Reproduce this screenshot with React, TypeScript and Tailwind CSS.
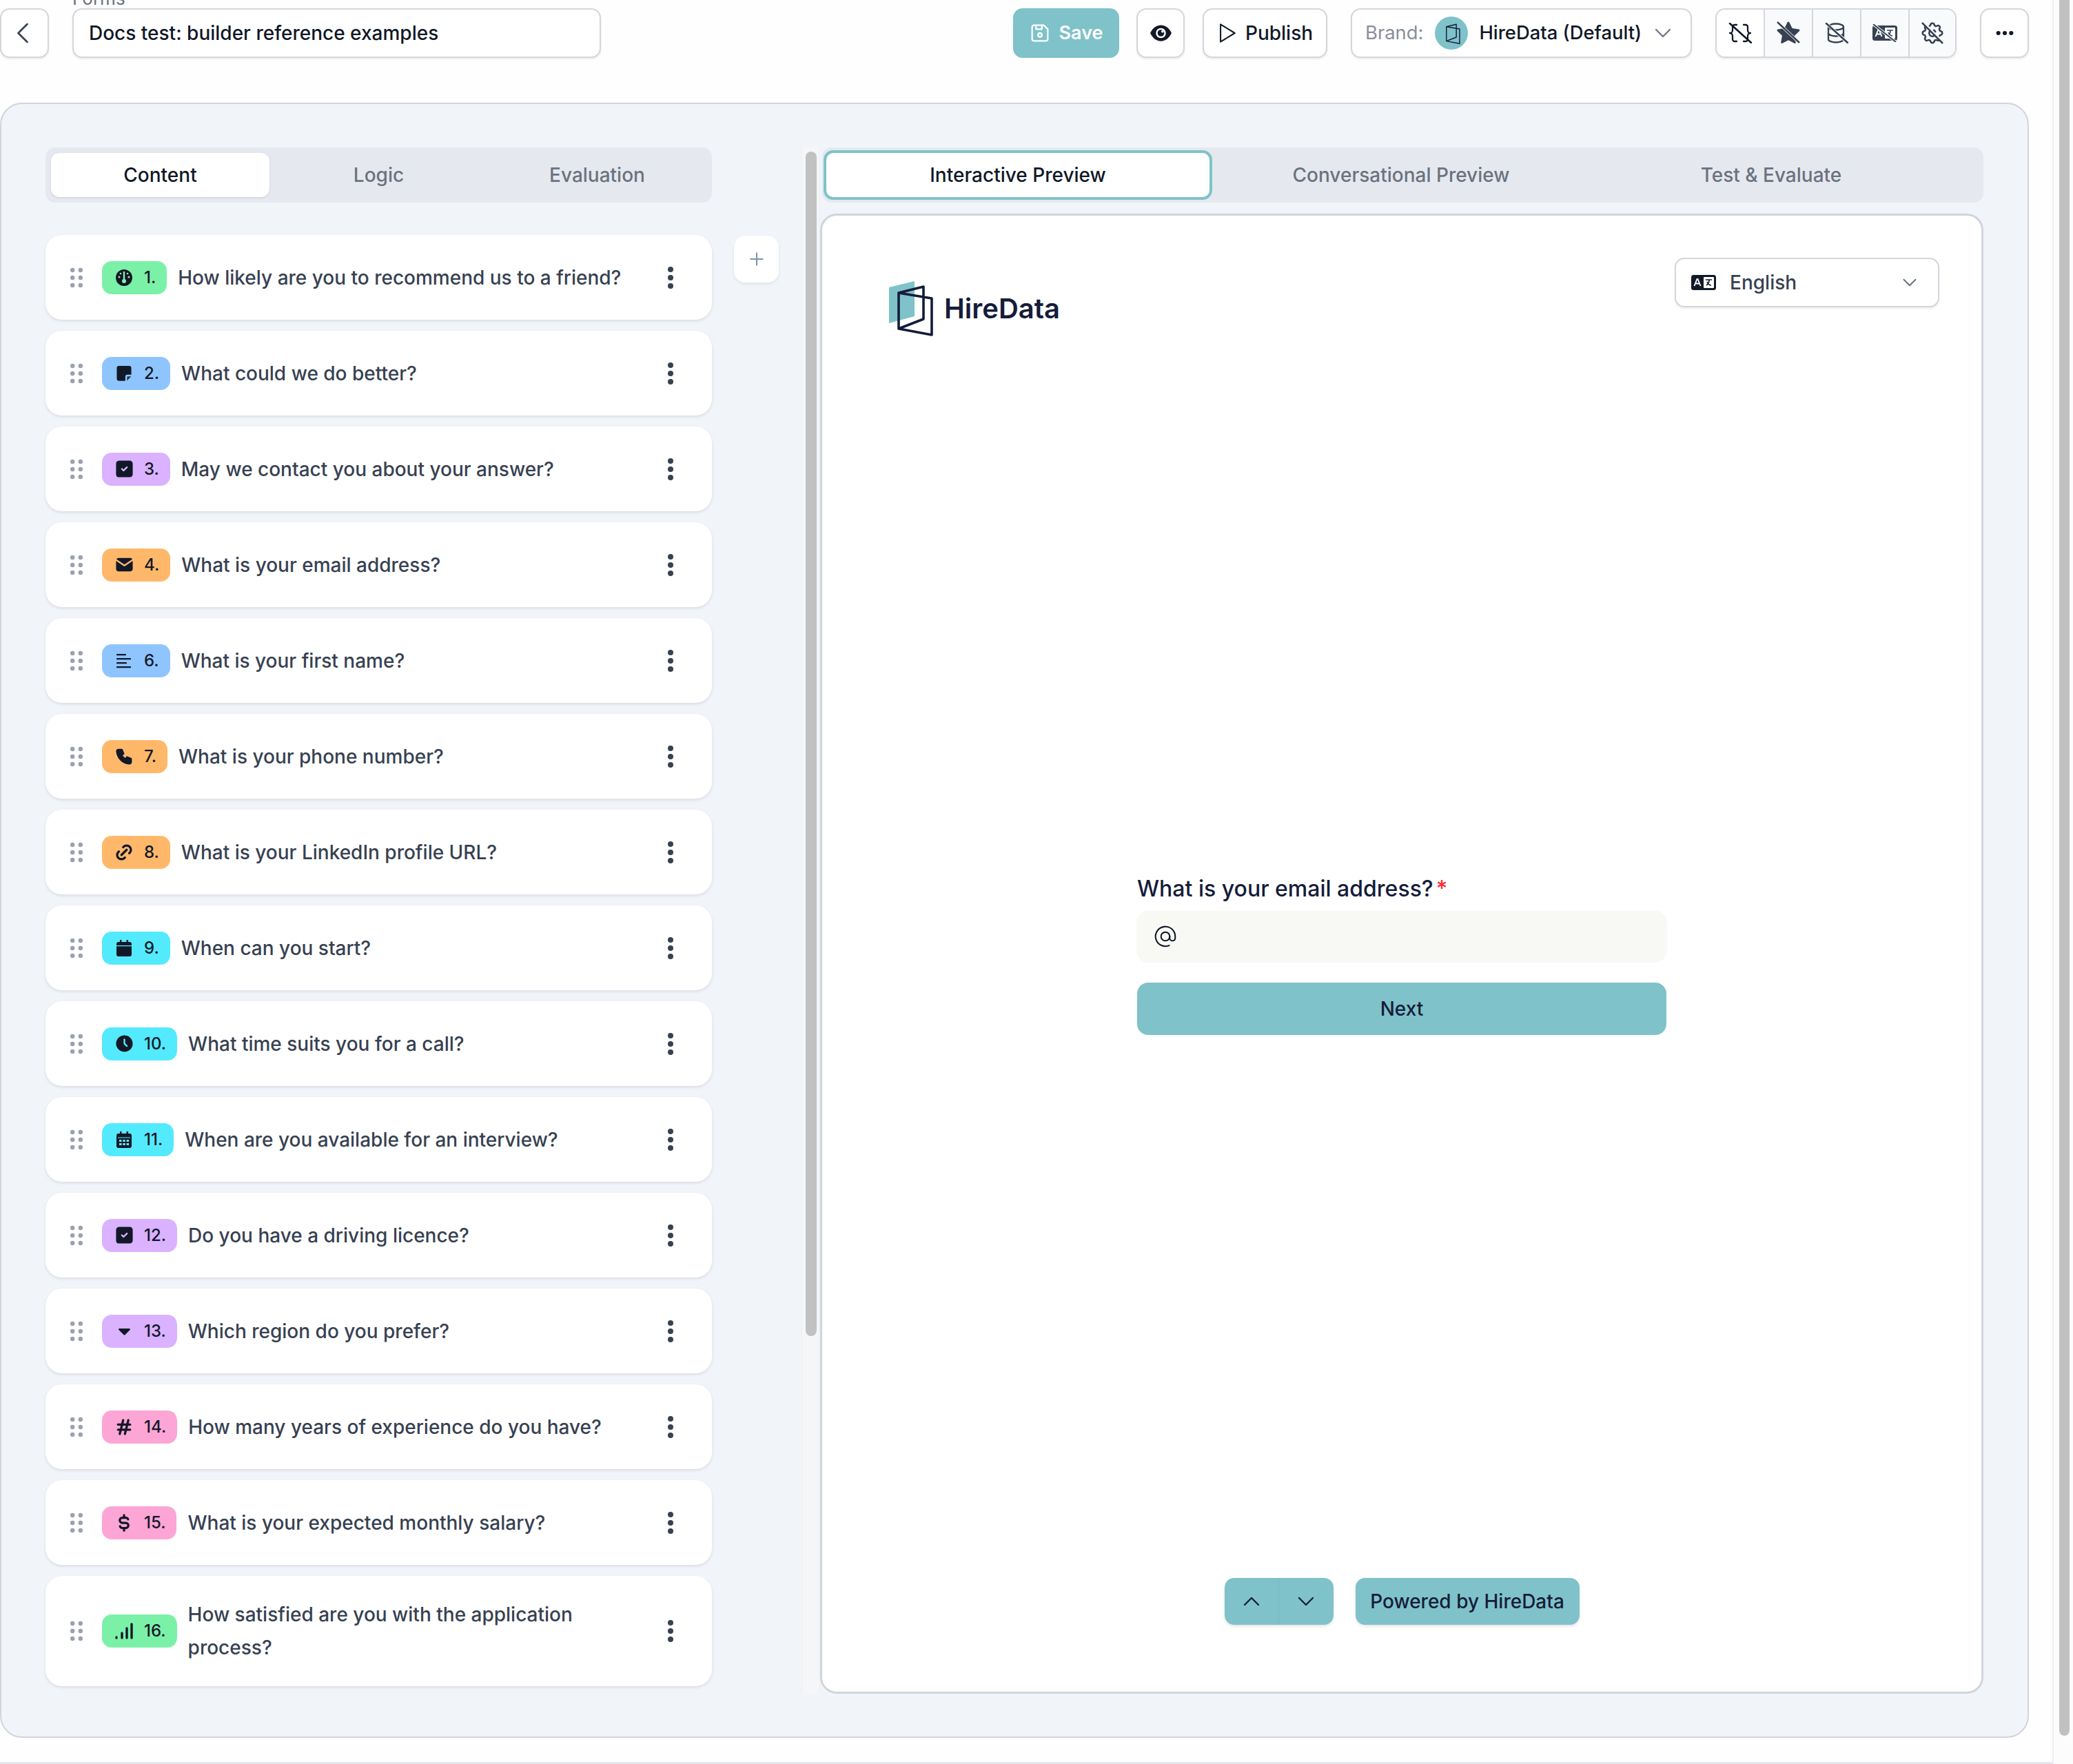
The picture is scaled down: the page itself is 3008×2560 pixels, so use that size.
import type { ReactNode } from "react";
import {
  TbAt,
  TbCaretDownFilled,
  TbChevronDown,
  TbChevronLeft,
  TbChevronUp,
  TbClockFilled,
  TbCurrencyDollar,
  TbDeviceFloppy,
  TbDots,
  TbHash,
  TbLink,
  TbMailFilled,
  TbPhoneFilled,
  TbPlayerPlay,
  TbPlus,
  TbSettingsOff,
  TbSquareCheckFilled,
  TbStarFilled,
} from "react-icons/tb";

function Logo({ className }: { className: string }) {
  return (
    <svg viewBox="0 0 64 80" fill="none" className={className}>
      <path d="M0 9 37 0v51L0 61z" fill="#7fc2c9" />
      <path
        d="M14 17 50 8v47L14 69zM14 17l48 8v53L14 69"
        stroke="#151c3a"
        strokeWidth="3.6"
        strokeLinejoin="round"
      />
    </svg>
  );
}

function GaugeIcon() {
  return (
    <svg viewBox="0 0 24 24" className="w-[24px] h-[24px]">
      <circle cx="12" cy="12" r="12" fill="#111827" />
      <path d="M12 3v13" stroke="#86efac" strokeWidth="2.400" />
      <circle cx="12" cy="17" r="3" fill="#86efac" />
      <circle cx="5" cy="11" r="1.500" fill="#86efac" />
      <circle cx="19" cy="11" r="1.500" fill="#86efac" />
      <circle cx="7" cy="6" r="1.300" fill="#86efac" />
      <circle cx="17" cy="6" r="1.300" fill="#86efac" />
    </svg>
  );
}

function NoteIcon() {
  return (
    <svg viewBox="0 0 24 24" className="w-[22px] h-[22px]">
      <path
        d="M4 0h16a3.5 3.5 0 0 1 3.5 3.5V14h-6.500a3 3 0 0 0-3 3v6.800H4A3.500 3.500 0 0 1 .5 20.500v-17A3.500 3.500 0 0 1 4 0z"
        fill="#111827"
      />
      <path d="M17 16.500h6.300l-6.800 7z" fill="#111827" opacity="0.85" />
    </svg>
  );
}

function LinesIcon() {
  return (
    <svg viewBox="0 0 22 22" className="w-[22px] h-[22px]" fill="#111827">
      <rect x="0" y="1" width="14" height="2.200" rx="0.600" />
      <rect x="0" y="7" width="21" height="2.200" rx="0.600" />
      <rect x="0" y="13" width="15" height="2.200" rx="0.600" />
      <rect x="0" y="19" width="21" height="2.200" rx="0.600" />
    </svg>
  );
}

function CalendarIcon() {
  return (
    <svg viewBox="0 0 22 24" className="w-[22px] h-[24px]" fill="#111827">
      <path d="M5 0h2.400v3h7.200V0H17v3h2a3 3 0 0 1 3 3v2H0V6a3 3 0 0 1 3-3h2z" />
      <path d="M0 9.200h22V21a3 3 0 0 1-3 3H3a3 3 0 0 1-3-3z" />
    </svg>
  );
}

function CalendarGridIcon() {
  return (
    <svg viewBox="0 0 22 24" className="w-[22px] h-[24px]">
      <path
        d="M5 0h2.400v3h7.200V0H17v3h2a3 3 0 0 1 3 3v15a3 3 0 0 1-3 3H3a3 3 0 0 1-3-3V6a3 3 0 0 1 3-3h2z"
        fill="#111827"
      />
      <path
        d="M2 8.500h18v1H2zM4 12h3.500v3H4zM9.300 12h3.500v3H9.300zM14.600 12h3.500v3h-3.500zM4 17h3.500v3H4zM9.300 17h3.500v3H9.300zM14.600 17h3.500v3h-3.500z"
        fill="#67e8f9"
      />
    </svg>
  );
}

function BarsIcon() {
  return (
    <svg viewBox="0 0 26 24" className="w-[26px] h-[24px]" stroke="#111827" strokeWidth="3.400" strokeLinecap="round">
      <path d="M2 22v-1M10 22v-7M17 22V8M24 22V2" />
    </svg>
  );
}

function BracesOff() {
  return (
    <svg viewBox="0 0 34 30" className="w-[34px] h-[30px]" fill="none" stroke="#111827" strokeWidth="2.300" strokeLinecap="round" strokeLinejoin="round">
      <path d="M12 3H9a3 3 0 0 0-3 3v5a4 4 0 0 1-4 4 4 4 0 0 1 4 4v5a3 3 0 0 0 3 3h3" />
      <path d="M22 3h3a3 3 0 0 1 3 3v5a4 4 0 0 0 4 4 4 4 0 0 0-4 4v5a3 3 0 0 1-3 3h-3" />
      <path d="M2 1 33 29" strokeWidth="2.600" />
    </svg>
  );
}

function DatabaseOff() {
  return (
    <svg viewBox="0 0 34 30" className="w-[34px] h-[30px]" fill="none" stroke="#374151" strokeWidth="2.300" strokeLinecap="round">
      <ellipse cx="16" cy="6" rx="11" ry="4.500" />
      <path d="M5 6v18c0 2.500 5 4.500 11 4.500S27 26.500 27 24V6M5 15c0 2.500 5 4.500 11 4.500S27 17.500 27 15" />
      <path d="M2 1 33 29" stroke="#f8fafc" strokeWidth="4.500" />
      <path d="M2 1 33 29" strokeWidth="2.600" />
    </svg>
  );
}

function LanguageBox({ slash }: { slash?: boolean }) {
  return (
    <svg viewBox="0 0 36 26" className="w-[36px] h-[26px]">
      <rect x="0" y="2" width="36" height="22" rx="3.500" fill={slash ? "#374151" : "#111827"} />
      <rect x="18" y="5" width="15" height="16" rx="1" fill="#ffffff" />
      <path d="M4.500 18 8.500 8h1l4 10M6.200 14.500h5.600" stroke="#ffffff" strokeWidth="1.900" fill="none" />
      <path d="M21 9h9M26 9c0 4-2 7-4 8M23 12c1 3 4 5 6 5" stroke={slash ? "#374151" : "#111827"} strokeWidth="1.700" fill="none" />
      {slash && <path d="M1 0 34 26" stroke="#f8fafc" strokeWidth="4" />}
      {slash && <path d="M1 0 34 26" stroke="#374151" strokeWidth="2" />}
    </svg>
  );
}

function StarOff() {
  return (
    <span className="relative flex w-[36px] h-[36px] items-center justify-center">
      <TbStarFilled className="w-[36px] h-[36px] text-[#374151]" />
      <svg viewBox="0 0 36 36" className="absolute inset-0 w-[36px] h-[36px]">
        <path d="M2 2 34 32" stroke="#f8fafc" strokeWidth="4" />
        <path d="M2 2 34 32" stroke="#374151" strokeWidth="2.400" />
      </svg>
    </span>
  );
}

function EyeIcon() {
  return (
    <svg viewBox="0 0 32 26" className="w-[31px] h-[26px]">
      <path d="M0 13C4 4.500 10 1 16 1s12 3.500 16 12c-4 8.500-10 12-16 12S4 21.500 0 13z" fill="#111827" />
      <circle cx="16" cy="13" r="7.500" fill="#ffffff" />
      <circle cx="16" cy="13" r="5" fill="#111827" />
      <circle cx="18.500" cy="10.500" r="2" fill="#ffffff" />
    </svg>
  );
}

function Grip() {
  return (
    <svg viewBox="0 0 18 30" className="w-[18px] h-[30px] text-gray-400 shrink-0" fill="currentColor">
      <circle cx="3.200" cy="4" r="3.200" />
      <circle cx="14.800" cy="4" r="3.200" />
      <circle cx="3.200" cy="15" r="3.200" />
      <circle cx="14.800" cy="15" r="3.200" />
      <circle cx="3.200" cy="26" r="3.200" />
      <circle cx="14.800" cy="26" r="3.200" />
    </svg>
  );
}

function Kebab() {
  return (
    <svg viewBox="0 0 10 32" className="w-[10px] h-[32px] text-[#374151] shrink-0" fill="currentColor">
      <circle cx="5" cy="4" r="4" />
      <circle cx="5" cy="16" r="4" />
      <circle cx="5" cy="28" r="4" />
    </svg>
  );
}

const iconClass = "w-[29px] h-[29px] text-[#111827] shrink-0";
const strokeIcon = "w-[30px] h-[30px] text-[#111827] shrink-0";

const questions: { n: string; text: string; color: string; icon: ReactNode; tall?: boolean }[] = [
  { n: "1.", text: "How likely are you to recommend us to a friend?", color: "bg-green-300", icon: <GaugeIcon /> },
  { n: "2.", text: "What could we do better?", color: "bg-blue-300", icon: <NoteIcon /> },
  { n: "3.", text: "May we contact you about your answer?", color: "bg-purple-300", icon: <TbSquareCheckFilled className={iconClass} /> },
  { n: "4.", text: "What is your email address?", color: "bg-orange-300", icon: <TbMailFilled className={iconClass} /> },
  { n: "6.", text: "What is your first name?", color: "bg-blue-300", icon: <LinesIcon /> },
  { n: "7.", text: "What is your phone number?", color: "bg-orange-300", icon: <TbPhoneFilled className={iconClass} /> },
  { n: "8.", text: "What is your LinkedIn profile URL?", color: "bg-orange-300", icon: <TbLink className={strokeIcon} strokeWidth={2.6} /> },
  { n: "9.", text: "When can you start?", color: "bg-cyan-300", icon: <CalendarIcon /> },
  { n: "10.", text: "What time suits you for a call?", color: "bg-cyan-300", icon: <TbClockFilled className={iconClass} /> },
  { n: "11.", text: "When are you available for an interview?", color: "bg-cyan-300", icon: <CalendarGridIcon /> },
  { n: "12.", text: "Do you have a driving licence?", color: "bg-purple-300", icon: <TbSquareCheckFilled className={iconClass} /> },
  { n: "13.", text: "Which region do you prefer?", color: "bg-purple-300", icon: <TbCaretDownFilled className={iconClass} /> },
  { n: "14.", text: "How many years of experience do you have?", color: "bg-pink-300", icon: <TbHash className={strokeIcon} strokeWidth={2.6} /> },
  { n: "15.", text: "What is your expected monthly salary?", color: "bg-pink-300", icon: <TbCurrencyDollar className={strokeIcon} strokeWidth={2.6} /> },
  { n: "16.", text: "How satisfied are you with the application process?", color: "bg-green-300", icon: <BarsIcon />, tall: true },
];

function QuestionCard({ n, text, color, icon, tall }: (typeof questions)[number]) {
  return (
    <div
      className={`flex items-center bg-white rounded-[24px] pl-[36px] pr-[55px] shadow-[0_2px_4px_rgba(15,23,42,0.1)] shrink-0 ${
        tall ? "h-[160px]" : "h-[123px]"
      }`}
    >
      <Grip />
      <div className={`ml-[28px] flex items-center h-[48px] rounded-[14px] pl-[18px] pr-[16px] shrink-0 ${color}`}>
        <span className="w-[28px] flex justify-center">{icon}</span>
        <span className="ml-[15px] text-[24px] font-medium text-[#111827]">{n}</span>
      </div>
      <p className="ml-[16px] max-w-[680px] text-[28px] leading-[48px] font-medium text-[#374151]">{text}</p>
      <div className="ml-auto">
        <Kebab />
      </div>
    </div>
  );
}

const headerBtn = "h-[72px] mt-[12px] flex items-center justify-center rounded-[14px] border-2 border-[#d4d6dc] bg-white shadow-[0_2px_3px_rgba(15,23,42,0.08)]";

export default function App() {
  return (
    <div className="w-[3008px] h-[2560px] flex overflow-hidden bg-[#fefefe] [font-family:Inter,sans-serif] text-[#111827]">
      <div className="w-[2978px] shrink-0 flex flex-col border-b-[3px] border-[#e5e7eb]">
        <header className="h-[149px] shrink-0 flex items-start pr-[34px]">
          <button className={`${headerBtn} w-[71px] bg-[#f8fafc]`}>
            <TbChevronLeft className="w-[52px] h-[52px] text-[#374151] -ml-[6px]" strokeWidth={1.2} />
          </button>
          <div className="ml-[34px] flex flex-col">
            <p className="-mt-[16px] h-[28px] leading-[28px] text-[26px] text-[#6b7280]">Forms</p>
            <div className="w-[767px] h-[72px] flex items-center rounded-[14px] border-2 border-[#d4d6dc] bg-white pl-[22px] shadow-[0_2px_3px_rgba(15,23,42,0.08)] text-[28px] font-medium">
              Docs test: builder reference examples
            </div>
          </div>

          <button className="ml-auto mt-[12px] w-[154px] h-[72px] flex items-center justify-center gap-[11px] rounded-[14px] bg-[#7fc2c9] text-white text-[27px] font-semibold pr-[2px]">
            <TbDeviceFloppy className="w-[34px] h-[34px]" strokeWidth={1.6} />
            Save
          </button>
          <button className={`${headerBtn} ml-[25px] w-[70px]`}>
            <EyeIcon />
          </button>
          <button className={`${headerBtn} ml-[26px] w-[181px] gap-[9px] pr-[6px] text-[28px] font-medium`}>
            <TbPlayerPlay className="w-[38px] h-[38px]" strokeWidth={1.3} />
            Publish
          </button>
          <div className={`${headerBtn} ml-[34px] w-[495px] !justify-start pl-[19px] text-[27.4px] font-medium`}>
            <span className="text-[#8b8f98] font-normal">Brand:</span>
            <span className="ml-[17px] w-[48px] h-[48px] rounded-full bg-[#7fc2c9] flex items-center justify-center">
              <Logo className="w-[26px] h-[32px]" />
            </span>
            <span className="ml-[16px]">HireData (Default)</span>
            <TbChevronDown className="ml-[11px] w-[40px] h-[40px] text-[#6b7280]" strokeWidth={1.3} />
          </div>
          <div className={`${headerBtn} ml-[34px] w-[350px] overflow-hidden !justify-start divide-x-2 divide-[#d4d6dc]`}>
            <span className="w-[70px] h-full flex items-center justify-center bg-white">
              <BracesOff />
            </span>
            <span className="w-[70px] h-full flex items-center justify-center bg-[#f8fafc]">
              <StarOff />
            </span>
            <span className="w-[70px] h-full flex items-center justify-center bg-[#f8fafc]">
              <DatabaseOff />
            </span>
            <span className="w-[70px] h-full flex items-center justify-center bg-[#f8fafc]">
              <LanguageBox slash />
            </span>
            <span className="flex-1 h-full flex items-center justify-center bg-[#f8fafc]">
              <TbSettingsOff className="w-[38px] h-[38px] text-[#374151]" strokeWidth={1.6} />
            </span>
          </div>
          <button className={`${headerBtn} ml-[34px] w-[71px]`}>
            <TbDots className="w-[32px] h-[32px]" strokeWidth={2.6} />
          </button>
        </header>

        <main className="w-[2944px] h-[2373px] shrink-0 flex rounded-[32px] border-2 border-[#d1d5db] bg-[#f1f4f8] pt-[62px] pl-[64px]">
          <section className="w-[967px] shrink-0 flex flex-col">
            <div className="mt-[1px] h-[80px] shrink-0 grid grid-cols-3 items-center rounded-[14px] bg-[#e5e9ef] px-[8px] text-[28px] font-medium">
              <div className="h-[64px] flex items-center justify-center rounded-[12px] bg-white shadow-sm text-[#111827]">Content</div>
              <div className="text-center text-[#6b7280]">Logic</div>
              <div className="text-center text-[#6b7280]">Evaluation</div>
            </div>
            <div className="mt-[47px] flex flex-col gap-[16px]">
              {questions.map((q) => (
                <QuestionCard key={q.n} {...q} />
              ))}
            </div>
          </section>

          <div className="ml-[32px] w-[65px] h-[68px] mt-[129px] shrink-0 flex items-center justify-center rounded-[16px] bg-white shadow-[0_2px_4px_rgba(15,23,42,0.08)]">
            <TbPlus className="w-[30px] h-[30px] text-[#7c93ad]" strokeWidth={1.6} />
          </div>

          <div className="ml-[33px] w-[27px] h-[2245px] shrink-0 bg-[#f5f6f8] border-x border-[#eceef1] pt-[7px] pl-[5px]">
            <div className="w-[16px] h-[1719px] rounded-full bg-[#c1c1c1]" />
          </div>

          <section className="ml-[3px] w-[1685px] shrink-0 flex flex-col">
            <div className="mt-[1px] h-[80px] shrink-0 flex items-center rounded-[14px] bg-[#e5e9ef] pl-[2px] text-[28px] font-medium">
              <div className="w-[564px] h-[72px] flex items-center justify-center rounded-[14px] border-4 border-[#7fc2c9] bg-white text-[#111827]">
                Interactive Preview
              </div>
              <div className="w-[548px] text-center text-[#6b7280]">Conversational Preview</div>
              <div className="w-[526px] text-center text-[#6b7280]">Test &amp; Evaluate</div>
            </div>

            <div className="mt-[16px] -ml-[3px] h-[2148px] flex flex-col rounded-[24px] border-[3px] border-[#d1d5db] bg-white">
              <div className="flex items-start justify-between pt-[61px] pl-[97px] pr-[61px]">
                <div className="mt-[34px] flex items-center gap-[16px]">
                  <Logo className="w-[64px] h-[80px]" />
                  <span className="text-[40px] leading-none font-semibold text-[#151c3a]">HireData</span>
                </div>
                <div className="w-[384px] h-[72px] flex items-center rounded-[14px] border-2 border-[#d4d6dc] bg-white pl-[22px] pr-[24px] shadow-[0_2px_3px_rgba(15,23,42,0.08)] text-[28px] font-medium text-[#374151]">
                  <LanguageBox />
                  <span className="ml-[20px]">English</span>
                  <TbChevronDown className="ml-auto w-[34px] h-[34px] text-[#6b7280]" strokeWidth={1.4} />
                </div>
              </div>

              <div className="flex-1 flex items-center justify-center pb-[8px]">
                <div className="w-[768px] flex flex-col">
                  <p className="text-[32px] leading-[44px] font-medium text-[#151c3a]">
                    What is your email address?<span className="ml-[4px] text-red-500">*</span>
                  </p>
                  <div className="mt-[10px] h-[73px] flex items-center rounded-[16px] bg-[#f8f9f4] pl-[22px] shadow-[0_1px_3px_rgba(15,23,42,0.06)]">
                    <TbAt className="w-[38px] h-[38px]" strokeWidth={1.3} />
                  </div>
                  <button className="mt-[31px] h-[76px] rounded-[16px] bg-[#7fc2c9] text-[28px] font-medium text-[#151c3a]">Next</button>
                </div>
              </div>

              <div className="flex justify-center gap-[32px] pb-[97px]">
                <div className="w-[158px] h-[68px] flex rounded-[14px] bg-[#7fc2c9] shadow-[0_2px_4px_rgba(15,23,42,0.12)] divide-x divide-[#78bac1]">
                  <span className="flex-1 flex items-center justify-center">
                    <TbChevronUp className="w-[40px] h-[40px] text-[#151c3a]" strokeWidth={1.4} />
                  </span>
                  <span className="flex-1 flex items-center justify-center">
                    <TbChevronDown className="w-[40px] h-[40px] text-[#151c3a]" strokeWidth={1.4} />
                  </span>
                </div>
                <div className="w-[325px] h-[68px] flex items-center justify-center rounded-[14px] bg-[#7fc2c9] shadow-[0_2px_4px_rgba(15,23,42,0.12)] text-[28px] font-medium text-[#151c3a]">
                  Powered by HireData
                </div>
              </div>
            </div>
          </section>
        </main>
      </div>

      <div className="flex-1 bg-[#fcfcfc] border-l-2 border-[#ededed] pl-[8px]">
        <div className="w-[15px] h-[2519px] rounded-b-full bg-[#c1c1c1]" />
      </div>
    </div>
  );
}
